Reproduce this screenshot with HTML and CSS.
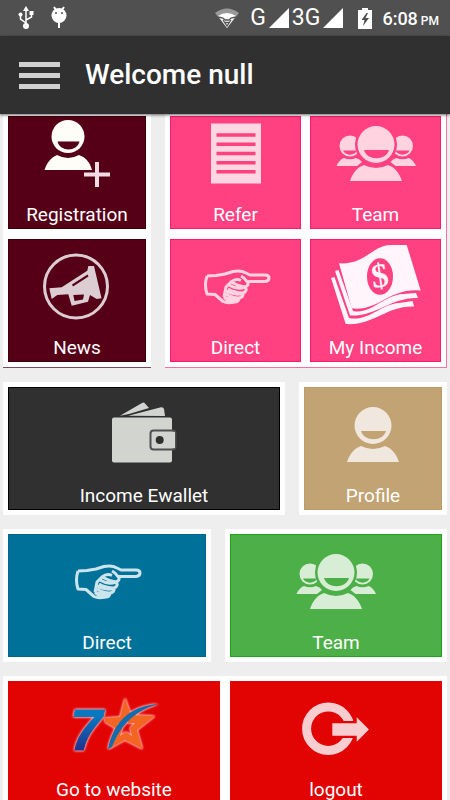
FILE: index.html
```html
<!DOCTYPE html>
<html lang="en">
<head>
<meta charset="utf-8">
<meta name="viewport" content="width=device-width, initial-scale=1">
<title>Welcome</title>
<link rel="stylesheet" href="styles.css">
</head>
<body>
<svg class="sprite" aria-hidden="true">
  <symbol id="person" viewBox="0 0 96 90">
    <path d="M22 67C25 58 30 53 36 51Q48 57 60 51C66 53 71 58 74 67Z"/>
    <circle cx="48" cy="30.5" r="18.5"/>
    <path class="cut" d="M36 36H61C58 47 39 47 36 36Z"/>
  </symbol>
  <symbol id="team" viewBox="0 0 96 90">
    <g id="mate">
      <circle cx="22" cy="32" r="10.5"/>
      <path class="cut" d="M15 36.500H29C27 42 17 42 15 36.500Z"/>
      <path d="M8.500 52C10 48 13 45 16 44Q22 46.500 28 44Q32 45 34 48L29 52Z"/>
    </g>
    <use href="#mate" transform="matrix(-1 0 0 1 96.500 0)"/>
    <circle class="cut" cx="48" cy="30.500" r="21"/>
    <path d="M22 67C25 58 30 53 36 51Q48 57 60 51C66 53 71 58 74 67Z"/>
    <circle cx="48" cy="30.500" r="18.500"/>
    <path class="cut" d="M36 36H61C58 47 39 47 36 36Z"/>
  </symbol>
  <symbol id="hand" viewBox="0 0 96 90">
    <g class="line">
      <path d="M19 29L28 28.500L37 27L45 24.500Q53 23 58 26L62 28H77Q81 28 81 31T77 34.500H59Q57 31 53 29M19 29Q16 38 19 47L27 47.500L35 54.500Q40 57 47 54.500"/>
      <path d="M59 34.500Q62 38 57 40Q50 39 43 35Q48 31 53 33.500M43 35L38 40L37 45M41 38Q49 43 57 40Q60 44 55 46Q47 46 40 42M37 45L36 50M38 44Q48 49 55 46Q56 50 51 51Q44 51 38 47M36 50Q44 54 51 51Q51 55 46 55Q40 55 36 50"/>
    </g>
  </symbol>
</svg>

<div class="status">
  <svg class="usb" viewBox="0 0 16 24" aria-hidden="true"><path d="M8 20V4M8 17L2.500 13V9M8 14L13.500 11V8" fill="none" stroke="#fff" stroke-width="1.500"/><path d="M5 5L8 0L11 5Z"/><circle cx="8" cy="20" r="3"/><circle cx="2.500" cy="8.500" r="2"/><path d="M11.500 5H15.500V9H11.500Z"/></svg>
  <svg class="bug" viewBox="0 0 16 24" aria-hidden="true"><path d="M3 1L5 4M13 1L11 4M8 16V22" fill="none" stroke="#fff" stroke-width="2"/><circle cx="8" cy="9.500" r="7.500"/><circle cx="5" cy="7" r="1" fill="#505050"/><circle cx="11" cy="7" r="1" fill="#505050"/></svg>
  <svg class="wifi" viewBox="0 0 24 20" aria-hidden="true"><path d="M0 5Q12-4 24 5L12 20Z" fill="#999"/><path d="M3 8Q12 2 21 8L12 20Z"/><path d="M3 9L8 10L10 12H14L16 10L21 9M8 12L12 18L16 12M10 14.500H14" fill="none" stroke="#555" stroke-width="1.300"/></svg>
  <span class="net">G</span>
  <svg class="signal" viewBox="0 0 20 20" aria-hidden="true"><path d="M0 20L20 0V20Z"/></svg>
  <span class="net">3G</span>
  <svg class="signal" viewBox="0 0 20 20" aria-hidden="true"><path d="M0 20L20 0V20Z"/></svg>
  <svg class="battery" viewBox="0 0 14 21" aria-hidden="true"><path d="M4 0H10V2H14V21H0V2H4Z"/><path d="M8.500 5L3.500 12H6.500L5 18L11 10H7.500L10 5Z" fill="#505050"/></svg>
  <time class="clock">6:08<small>PM</small></time>
</div>

<header class="appbar">
  <button class="menu" type="button" aria-label="Menu"><span></span><span></span><span></span></button>
  <h1>Welcome null</h1>
</header>

<main class="scroller">
  <div class="board">
    <div class="row row-first">
      <section class="card stack maroon">
        <a class="tile" href="#registration">
          <svg viewBox="0 0 96 90" fill="#fffdf7" aria-hidden="true"><circle cx="39" cy="22.500" r="16.500"/><path class="cut" d="M28.500 27.500H50.500C48 38 31 38 28.500 27.500Z"/><path d="M15.500 56C18 48 23 43 28 41Q39 47 50 41C56 43 61 48 63 56Z"/><path d="M68 48V73M55 60.500H81" stroke="#f0dce2" stroke-width="4"/></svg>
          <span>Registration</span>
        </a>
        <a class="tile" href="#news">
          <svg viewBox="0 0 96 90" fill="#dccdd3" aria-hidden="true"><circle cx="47" cy="39.500" r="31.500" fill="none" stroke="#dccdd3" stroke-width="3"/><path d="M20.300 41.300L32.700 40.300L58.300 23.700L59.300 19H65L72.500 51.300L67.700 52L61 48L59 54.700L42.700 58.700L39.300 47.300L28.300 48L22.700 52Z"/><path class="cut" d="M44.300 48L55 47.500L54 52.500L45.500 54ZM43 37.500L58.500 27.500L59.500 29.500L44 39.500Z"/></svg>
          <span>News</span>
        </a>
      </section>
      <section class="card quad pink">
        <a class="tile" href="#refer">
          <svg viewBox="0 0 96 90" fill="#ffd6e2" aria-hidden="true"><path d="M23 9.500H73V69.500H23Z"/><path d="M28.500 21H67.500M28.500 30.300H67.500M28.500 39.500H67.500M28.500 48.700H67.500M28.500 57.700H67.500" stroke="#ff4081" stroke-width="3.500"/></svg>
          <span>Refer</span>
        </a>
        <a class="tile" href="#team">
          <svg aria-hidden="true"><use href="#team"/></svg>
          <span>Team</span>
        </a>
        <a class="tile" href="#direct">
          <svg aria-hidden="true"><use href="#hand"/></svg>
          <span>Direct</span>
        </a>
        <a class="tile" href="#income">
          <svg viewBox="0 0 96 90" fill="#fff5fb" aria-hidden="true">
            <path d="M3 31L6.500 30L21 71C40 75 53 57 71 56L84.700 54L86 59.500C60 58 45 79 17.700 77Z"/>
            <path d="M7 24L10.500 23L25 64C42 68 56 48 75 47L88 46L90 51C63 50 48 70 22 68.500Z"/>
            <path d="M11 16.300C38 18 45-3 64-2H78.700L92.700 43.500C62 40 50 65 23.700 61.300Z"/>
            <ellipse class="cut" cx="52" cy="29.500" rx="13" ry="18.300"/>
            <text class="dollar" x="52" y="40" transform="rotate(-8 52 29)">$</text>
          </svg>
          <span>My Income</span>
        </a>
      </section>
    </div>

    <div class="row row-wide">
      <section class="card dark">
        <a class="tile" href="#ewallet">
          <svg viewBox="0 0 96 90" fill="#d2d4cf" aria-hidden="true"><path d="M24 20.700L46 8Q48 7 49 8.500L53 13L33 19ZM32.300 20.700L65 12.300Q67.500 12 68 14L69 21Z"/><rect x="16" y="22.500" width="60" height="45" rx="2"/><rect x="54.500" y="35.500" width="25" height="19" rx="3" stroke="#505050" stroke-width="2"/><path d="M75 37H79V53H75Z"/><circle class="cut" cx="63.700" cy="45" r="4"/></svg>
          <span>Income Ewallet</span>
        </a>
      </section>
      <section class="card tan">
        <a class="tile" href="#profile">
          <svg aria-hidden="true"><use href="#person"/></svg>
          <span>Profile</span>
        </a>
      </section>
    </div>

    <div class="row row-even">
      <section class="card blue">
        <a class="tile" href="#direct">
          <svg aria-hidden="true"><use href="#hand"/></svg>
          <span>Direct</span>
        </a>
      </section>
      <section class="card green">
        <a class="tile" href="#team">
          <svg aria-hidden="true"><use href="#team"/></svg>
          <span>Team</span>
        </a>
      </section>
    </div>

    <section class="card pair red">
      <a class="tile" href="#website">
        <svg class="brand" viewBox="0 0 96 90" aria-hidden="true">
          <defs><linearGradient id="sea" x1="0" y1="0" x2="0" y2="1"><stop offset="0.300" stop-color="#0878c0"/><stop offset="0.800" stop-color="#223390"/></linearGradient></defs>
          <text class="seven" x="4" y="61" fill="url(#sea)" stroke="url(#sea)">7</text>
          <path fill="#f26522" fill-rule="evenodd" d="M59 9L65 26L89 27L71 41L76.500 60L59 51L42.500 60L49 39L39 33V29L54 28ZM60 27L57 34L51 35L56 40L54 47L60 43L66 47L64 39L69 34H62Z"/>
          <path fill="#126cae" d="M42 60C47 35 62 17 92.500 15C68 22 54 37 46 58Z"/>
        </svg>
        <span>Go to website</span>
      </a>
      <button class="tile" type="button">
        <svg viewBox="0 0 96 90" fill="#f8cdd0" aria-hidden="true"><circle cx="40.300" cy="39.700" r="21.700" fill="none" stroke="#f8cdd0" stroke-width="9"/><path class="cut" d="M55 32H68V49H55Z"/><path d="M44.300 34.300H68.700V28.300L81 40.500L68.700 52.700V46.700H44.300Z"/></svg>
        <span>logout</span>
      </button>
    </section>
  </div>
</main>
</body>
</html>
```
FILE: styles.css
```css
* {
  box-sizing: border-box;
}

body {
  display: flex;
  flex-direction: column;
  height: 100vh;
  margin: 0;
  background: #eee;
  font-family: Roboto, "Liberation Sans", sans-serif;
}

.sprite {
  position: absolute;
  width: 0;
  height: 0;
}

/* Status bar */
.status {
  display: flex;
  flex: none;
  align-items: center;
  gap: 3px;
  height: 36px;
  padding: 0 11px 0 18px;
  background: #505050;
  color: #fff;
  fill: #fff;
}

.usb,
.bug {
  width: 16px;
  height: 24px;
}

.bug {
  margin-left: 14px;
}

.wifi {
  width: 24px;
  height: 20px;
  margin-left: auto;
  margin-right: 8px;
}

.net {
  font-size: 23px;
  line-height: 36px;
}

.signal {
  width: 20px;
  height: 20px;
}

.battery {
  width: 14px;
  height: 21px;
  margin: 0 7px 0 12px;
}

.clock {
  font-size: 18px;
  font-weight: 500;
  white-space: nowrap;
}

.clock small {
  margin-left: 3px;
  font-size: 12px;
}

/* App bar */
.appbar {
  z-index: 1;
  display: flex;
  flex: none;
  align-items: center;
  gap: 25px;
  height: 78px;
  padding: 0 19px;
  background: #303030;
  box-shadow: 0 1px 3px rgba(0, 0, 0, 0.6);
  color: #fff;
}

.appbar h1 {
  margin: 0;
  font-size: 28px;
  font-weight: 500;
  line-height: 36px;
}

.menu {
  display: grid;
  gap: 6px;
  width: 41px;
  padding: 0;
  border: 0;
  background: none;
}

.menu span {
  height: 5px;
  background: #d0d0d0;
}

/* Board; its top padding starts just under the app bar */
.scroller {
  flex: 1;
  min-height: 0;
  overflow-y: auto;
  scrollbar-width: none;
}

.board {
  display: grid;
  gap: 14px;
  margin-top: -3px;
  padding: 0 3px 14px;
}

.row {
  display: grid;
  gap: 14px;
}

.row-first {
  grid-template-columns: 148fr 282fr;
}

.row-wide {
  grid-template-columns: 282fr 148fr;
}

.row-even {
  grid-template-columns: 208fr 222fr;
}

.card {
  display: grid;
  grid-auto-rows: 123px;
  gap: 10px;
  padding: 5px;
  background: #fff;
}

.row-first .card {
  grid-template-rows: 113px;
}

.stack {
  border-bottom: 1px solid #7a4a58;
}

.quad {
  grid-template-columns: 1fr 1fr;
  column-gap: 9px;
  border: solid #ff6f9f;
  border-width: 0 1px 1px 0;
}

.pair {
  grid-template-columns: 1fr 1fr;
}

.tile {
  display: flex;
  flex-direction: column;
  align-items: center;
  justify-content: flex-end;
  min-width: 0;
  padding: 0 0 4px;
  border: 0;
  background: var(--tile);
  box-shadow: inset 0 0 0 1px var(--edge);
  color: #fff;
  fill: var(--icon);
  font-family: inherit;
  font-size: 19px;
  line-height: 21px;
  text-decoration: none;
}

.tile svg {
  flex: none;
  width: 96px;
  height: 90px;
  overflow: visible;
}

.cut {
  fill: var(--tile);
}

.line {
  fill: none;
  stroke: var(--icon);
  stroke-width: 3px;
  stroke-linejoin: round;
}

.dollar {
  font: bold 34px "Liberation Serif", serif;
  text-anchor: middle;
}

.brand {
  filter: drop-shadow(0 0 1px #ffc4c4) drop-shadow(0 0 1px #ff9a9a);
}

.seven {
  font: italic bold 58px "Liberation Sans", sans-serif;
  stroke-width: 1px;
}

.maroon {
  --tile: #560018;
  --edge: #3c0008;
}

.pink {
  --tile: #ff4081;
  --edge: #fb1a6c;
  --icon: #ffd3e0;
}

.dark {
  --tile: #303030;
  --edge: #000;
}

.tan {
  --tile: #c2a373;
  --edge: #bf9c66;
  --icon: #f0e8de;
}

.blue {
  --tile: #007299;
  --edge: #00688f;
  --icon: #cce4ec;
}

.green {
  --tile: #4caf47;
  --edge: #1fa81a;
  --icon: #d8edd5;
}

.red {
  --tile: #e20303;
  --edge: #e20303;
}
```
